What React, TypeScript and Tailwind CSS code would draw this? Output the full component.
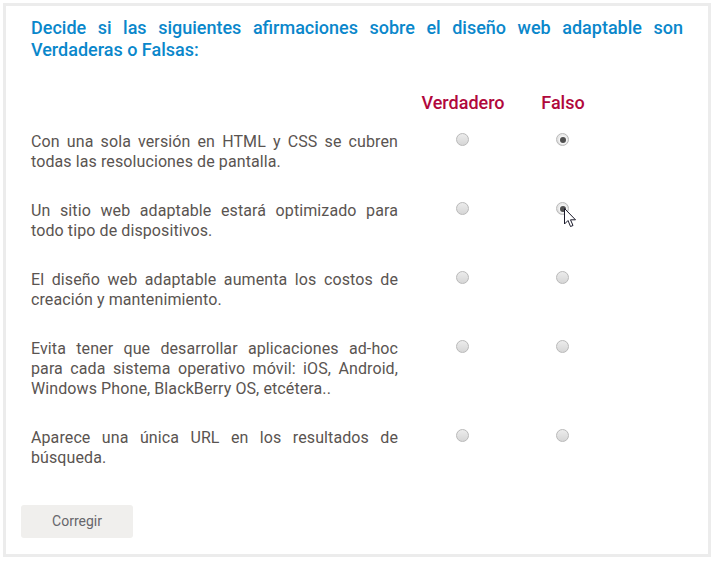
import React from "react";

const rows: { text: string; checked: "v" | "f" | null }[] = [
  { text: "Con una sola versión en HTML y CSS se cubren todas las resoluciones de pantalla.", checked: "f" },
  { text: "Un sitio web adaptable estará optimizado para todo tipo de dispositivos.", checked: "f" },
  { text: "El diseño web adaptable aumenta los costos de creación y mantenimiento.", checked: null },
  { text: "Evita tener que desarrollar aplicaciones ad-hoc para cada sistema operativo móvil: iOS, Android, Windows Phone, BlackBerry OS, etcétera..", checked: null },
  { text: "Aparece una única URL en los resultados de búsqueda.", checked: null },
];

function Radio({ checked }: { checked: boolean }) {
  return (
    <div className="mt-[1px] flex h-[13px] w-[13px] items-center justify-center rounded-full border border-[#b9b9b9] bg-[linear-gradient(#ececec,#d6d6d6)]">
      {checked && <div className="h-[6px] w-[6px] rounded-full bg-[#505050] shadow-[0_0_0_1.5px_#f4f4f4]" />}
    </div>
  );
}

export default function App() {
  return (
    <div className="p-[3px] font-['Roboto',sans-serif]">
      <div className="relative h-[554px] w-[708px] border-[3px] border-[#ececec] bg-white px-[15px] pt-[11px]">
        <h1 className="px-[10px] text-justify text-[18px] font-medium leading-[22px] text-[#0a87cb]">
          Decide si las siguientes afirmaciones sobre el diseño web adaptable son Verdaderas o Falsas:
        </h1>
        <div className="mt-[31px] px-[10px]">
          <div className="flex text-[18px] font-medium leading-[22px] text-[#b1083c]">
            <div className="w-[367px]" />
            <div className="ml-[15px] w-[100px] text-center">Verdadero</div>
            <div className="w-[100px] text-center">Falso</div>
          </div>
          <div className="mt-[18px] flex flex-col gap-[29px]">
            {rows.map((r, i) => (
              <div key={i} className="flex items-start">
                <p className="w-[367px] text-justify text-[16px] leading-[20px] tracking-[0.1px] text-[#5a5451]">{r.text}</p>
                <div className="ml-[15px] flex w-[100px] justify-center pr-[1px]">
                  <Radio checked={r.checked === "v"} />
                </div>
                <div className="flex w-[100px] justify-center pr-[1px]">
                  <Radio checked={r.checked === "f"} />
                </div>
              </div>
            ))}
          </div>
        </div>
        <button className="mt-[37px] h-[33px] w-[112px] rounded-[3px] bg-[#f0efed] text-[14px] text-[#66666b]">
          Corregir
        </button>
        <svg
          className="absolute left-[558px] top-[202px]"
          width="13"
          height="20"
          viewBox="0 0 13 20"
        >
          <path
            d="M0.5 0.5 L0.5 16 L4 12.5 L6.5 18.5 L9 17.5 L6.5 11.8 L11.5 11.8 Z"
            fill="white"
            stroke="#1a1a2a"
            strokeWidth="1"
            strokeLinejoin="round"
          />
        </svg>
      </div>
    </div>
  );
}
